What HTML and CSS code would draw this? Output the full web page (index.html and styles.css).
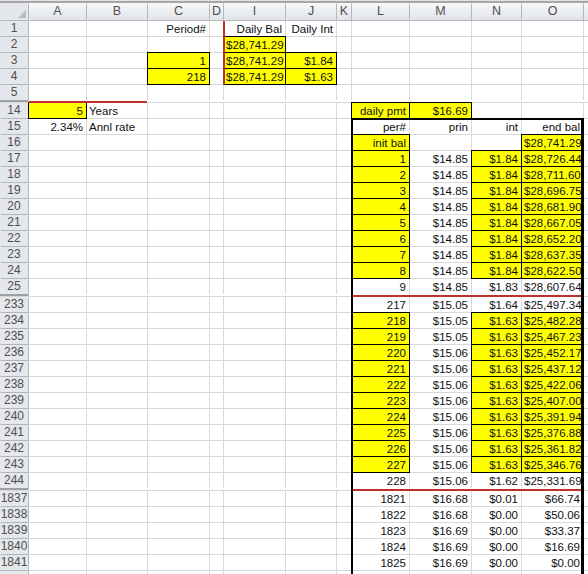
FILE: index.html
```html
<!DOCTYPE html>
<html>
<head>
<meta charset="utf-8">
<link rel="stylesheet" href="styles.css">
</head>
<body>
<div class="chrome"></div>
<div class="wrap">
<div class="sheet cells">
<div class="corner"><svg width="28" height="17" viewBox="0 0 28 17"><polygon points="26,7 26,15 18,15" fill="#b9bec4"/></svg></div><div class="h">A</div><div class="h">B</div><div class="h">C</div><div class="h">D</div><div class="h">I</div><div class="h">J</div><div class="h">K</div><div class="h">L</div><div class="h">M</div><div class="h">N</div><div class="h">O</div><div class="h"></div>
<div class="n">1</div><div></div><div></div><div>Period#</div><div></div><div>Daily Bal</div><div>Daily Int</div><div></div><div></div><div></div><div></div><div></div><div></div>
<div class="n">2</div><div></div><div></div><div></div><div></div><div class="y">$28,741.29</div><div></div><div></div><div></div><div></div><div></div><div></div><div></div>
<div class="n">3</div><div></div><div></div><div class="y">1</div><div></div><div class="y">$28,741.29</div><div class="y">$1.84</div><div></div><div></div><div></div><div></div><div></div><div></div>
<div class="n">4</div><div></div><div></div><div class="y">218</div><div></div><div class="y">$28,741.29</div><div class="y">$1.63</div><div></div><div></div><div></div><div></div><div></div><div></div>
<div class="n">5</div><div></div><div></div><div></div><div></div><div></div><div></div><div></div><div></div><div></div><div></div><div></div><div></div>
<div class="sph"></div><div class="sp"></div>
<div class="n">14</div><div class="y">5</div><div class="l">Years</div><div></div><div></div><div></div><div></div><div></div><div class="y">daily pmt</div><div class="y">$16.69</div><div></div><div></div><div></div>
<div class="n">15</div><div>2.34%</div><div class="l">Annl rate</div><div></div><div></div><div></div><div></div><div></div><div>per#</div><div>prin</div><div>int</div><div>end bal</div><div></div>
<div class="n">16</div><div></div><div></div><div></div><div></div><div></div><div></div><div></div><div class="y">init bal</div><div></div><div></div><div class="y">$28,741.29</div><div></div>
<div class="n">17</div><div></div><div></div><div></div><div></div><div></div><div></div><div></div><div class="y">1</div><div>$14.85</div><div class="y">$1.84</div><div class="y">$28,726.44</div><div></div>
<div class="n">18</div><div></div><div></div><div></div><div></div><div></div><div></div><div></div><div class="y">2</div><div>$14.85</div><div class="y">$1.84</div><div class="y">$28,711.60</div><div></div>
<div class="n">19</div><div></div><div></div><div></div><div></div><div></div><div></div><div></div><div class="y">3</div><div>$14.85</div><div class="y">$1.84</div><div class="y">$28,696.75</div><div></div>
<div class="n">20</div><div></div><div></div><div></div><div></div><div></div><div></div><div></div><div class="y">4</div><div>$14.85</div><div class="y">$1.84</div><div class="y">$28,681.90</div><div></div>
<div class="n">21</div><div></div><div></div><div></div><div></div><div></div><div></div><div></div><div class="y">5</div><div>$14.85</div><div class="y">$1.84</div><div class="y">$28,667.05</div><div></div>
<div class="n">22</div><div></div><div></div><div></div><div></div><div></div><div></div><div></div><div class="y">6</div><div>$14.85</div><div class="y">$1.84</div><div class="y">$28,652.20</div><div></div>
<div class="n">23</div><div></div><div></div><div></div><div></div><div></div><div></div><div></div><div class="y">7</div><div>$14.85</div><div class="y">$1.84</div><div class="y">$28,637.35</div><div></div>
<div class="n">24</div><div></div><div></div><div></div><div></div><div></div><div></div><div></div><div class="y">8</div><div>$14.85</div><div class="y">$1.84</div><div class="y">$28,622.50</div><div></div>
<div class="n">25</div><div></div><div></div><div></div><div></div><div></div><div></div><div></div><div>9</div><div>$14.85</div><div>$1.83</div><div>$28,607.64</div><div></div>
<div class="sph"></div><div class="sp"></div>
<div class="n">233</div><div></div><div></div><div></div><div></div><div></div><div></div><div></div><div>217</div><div>$15.05</div><div>$1.64</div><div>$25,497.34</div><div></div>
<div class="n">234</div><div></div><div></div><div></div><div></div><div></div><div></div><div></div><div class="y">218</div><div>$15.05</div><div class="y">$1.63</div><div class="y">$25,482.28</div><div></div>
<div class="n">235</div><div></div><div></div><div></div><div></div><div></div><div></div><div></div><div class="y">219</div><div>$15.05</div><div class="y">$1.63</div><div class="y">$25,467.23</div><div></div>
<div class="n">236</div><div></div><div></div><div></div><div></div><div></div><div></div><div></div><div class="y">220</div><div>$15.06</div><div class="y">$1.63</div><div class="y">$25,452.17</div><div></div>
<div class="n">237</div><div></div><div></div><div></div><div></div><div></div><div></div><div></div><div class="y">221</div><div>$15.06</div><div class="y">$1.63</div><div class="y">$25,437.12</div><div></div>
<div class="n">238</div><div></div><div></div><div></div><div></div><div></div><div></div><div></div><div class="y">222</div><div>$15.06</div><div class="y">$1.63</div><div class="y">$25,422.06</div><div></div>
<div class="n">239</div><div></div><div></div><div></div><div></div><div></div><div></div><div></div><div class="y">223</div><div>$15.06</div><div class="y">$1.63</div><div class="y">$25,407.00</div><div></div>
<div class="n">240</div><div></div><div></div><div></div><div></div><div></div><div></div><div></div><div class="y">224</div><div>$15.06</div><div class="y">$1.63</div><div class="y">$25,391.94</div><div></div>
<div class="n">241</div><div></div><div></div><div></div><div></div><div></div><div></div><div></div><div class="y">225</div><div>$15.06</div><div class="y">$1.63</div><div class="y">$25,376.88</div><div></div>
<div class="n">242</div><div></div><div></div><div></div><div></div><div></div><div></div><div></div><div class="y">226</div><div>$15.06</div><div class="y">$1.63</div><div class="y">$25,361.82</div><div></div>
<div class="n">243</div><div></div><div></div><div></div><div></div><div></div><div></div><div></div><div class="y">227</div><div>$15.06</div><div class="y">$1.63</div><div class="y">$25,346.76</div><div></div>
<div class="n">244</div><div></div><div></div><div></div><div></div><div></div><div></div><div></div><div>228</div><div>$15.06</div><div>$1.62</div><div>$25,331.69</div><div></div>
<div class="sph"></div><div class="sp"></div>
<div class="n">1837</div><div></div><div></div><div></div><div></div><div></div><div></div><div></div><div>1821</div><div>$16.68</div><div>$0.01</div><div>$66.74</div><div></div>
<div class="n">1838</div><div></div><div></div><div></div><div></div><div></div><div></div><div></div><div>1822</div><div>$16.68</div><div>$0.00</div><div>$50.06</div><div></div>
<div class="n">1839</div><div></div><div></div><div></div><div></div><div></div><div></div><div></div><div>1823</div><div>$16.69</div><div>$0.00</div><div>$33.37</div><div></div>
<div class="n">1840</div><div></div><div></div><div></div><div></div><div></div><div></div><div></div><div>1824</div><div>$16.69</div><div>$0.00</div><div>$16.69</div><div></div>
<div class="n">1841</div><div></div><div></div><div></div><div></div><div></div><div></div><div></div><div>1825</div><div>$16.69</div><div>$0.00</div><div>$0.00</div><div></div>
<div class="n"></div><div></div><div></div><div></div><div></div><div></div><div></div><div></div><div></div><div></div><div></div><div></div><div></div>
</div>
<div class="sheet over">
<div class="rb rb1"></div>
<div class="rb rb2"></div>
<div class="rb rb3"></div>
<div class="rv"></div>
<div class="frame"></div>
</div>
</div>
</body>
</html>
```
FILE: styles.css
```css
* { box-sizing: border-box; }
html, body { margin: 0; height: 100%; overflow: hidden; background: #fff; }
body {
  font-family: "Liberation Sans Narrow", "Liberation Sans", Arial, sans-serif;
  font-size: 11.5px;
  color: #111;
}
.chrome { height: 3px; background: linear-gradient(#e3e3e3 0 1px, #a7a7a7 1px); }
.wrap { display: grid; grid-template-columns: 100%; }
.wrap > .sheet { grid-area: 1 / 1; }
.sheet {
  display: grid;
  grid-template-columns: 28px 57px 60px 61px 13px 61px 50px 14px 57px 61px 49px 61px 1fr;
  grid-template-rows: 17px repeat(5, 15px) 1px repeat(12, 15px) 1px repeat(12, 15px) 1px repeat(5, 15px) 15px;
  gap: 1px;
}
.cells { background: #d9d9d9; }
.cells > div {
  background: #fff;
  text-align: right;
  padding: 1px 3px 0 2px;
  line-height: 15px;
  white-space: nowrap;
}
.cells > .l { text-align: left; }
.cells > .y { background: #ffff00; outline: 1px solid #000; }
.cells > .h {
  background: linear-gradient(#f7f8fa, #e0e4e9);
  text-align: center;
  padding: 0;
  line-height: 17px;
  color: #4f4f4f;
  font-size: 12.5px;
  box-shadow: 1px 1px 0 #b3b7bc;
}
.cells > .n {
  background: #e4e7eb;
  text-align: center;
  color: #4f4f4f;
  font-size: 12px;
  padding: 0;
  box-shadow: 1px 1px 0 #b3b7bc;
}
.cells > .corner {
  background: #e4e7eb;
  padding: 0;
  line-height: 0;
  box-shadow: 1px 1px 0 #b3b7bc;
}
.cells > .sph { background: #9da1a6; margin-top: -1px; }
.cells > .sp { grid-column: 2 / -1; background: #fff; margin-top: -1px; }
.over { background: transparent; z-index: 1; }
.rb { background: #c0302a; margin-bottom: -1px; }
.rb1 { grid-column: 2 / 4; grid-row: 7; }
.rb2 { grid-column: 9 / 13; grid-row: 20; }
.rb3 { grid-column: 9 / 13; grid-row: 33; }
.rv {
  grid-column: 6;
  grid-row: 2 / 6;
  justify-self: start;
  width: 2px;
  margin: 0 0 -1px -1px;
  background: #c0302a;
}
.frame {
  grid-column: 9 / 13;
  grid-row: 9 / -1;
  margin: -1px -1px 0 -1px;
  border: 2px solid #000;
  border-right-width: 3px;
  border-bottom: 0;
}
```
